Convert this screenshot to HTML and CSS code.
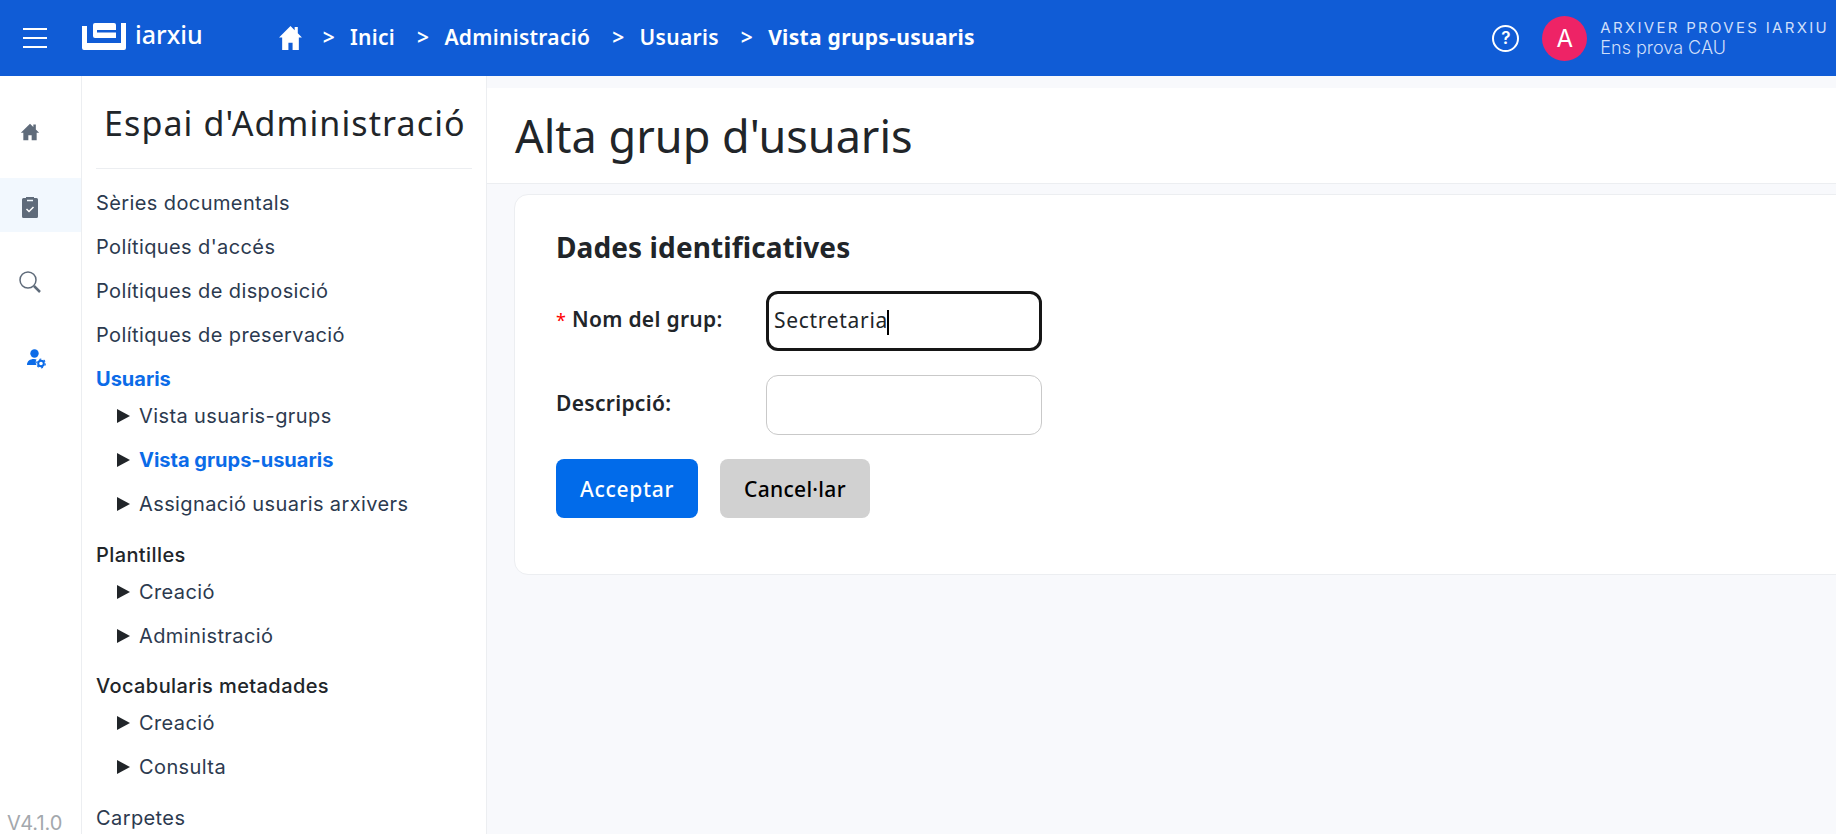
FILE: index.html
```html
<!DOCTYPE html>
<html>
<head>
    <title>Alta grup d'usuaris</title>
    <link rel="stylesheet" href="styles.css">
</head>
<body>
    <header class="topbar">
        <div class="menu-btn"><span></span><span></span><span></span></div>
        <div class="logo">
            <svg width="45" height="27" viewBox="0 0 45 27">
                <path d="M0 3h5v17h34V0h5v25a2 2 0 0 1-2 2H2a2 2 0 0 1-2-2z" fill="#fff"/>
                <path d="M13 0h19a2 2 0 0 1 2 2v13H13a2 2 0 0 1-2-2V2a2 2 0 0 1 2-2z" fill="#fff"/>
                <rect x="15" y="7" width="19" height="2.500" fill="#105cd6"/>
            </svg>
            <span class="logo-text">iarxiu</span>
        </div>
        <nav class="crumbs">
            <svg class="crumb-home" width="25" height="25" viewBox="0 0 24 24">
                <path d="M12 1 1 12h3v12h6v-7h4v7h6V12h3l-4-4V2h-3v3z" fill="#fff"/>
            </svg>
            <span class="crumb"><b>&gt;</b>Inici</span>
            <span class="crumb"><b>&gt;</b>Administració</span>
            <span class="crumb"><b>&gt;</b>Usuaris</span>
            <span class="crumb crumb-last"><b>&gt;</b>Vista grups-usuaris</span>
        </nav>
        <div class="user">
            <div class="help">?</div>
            <div class="avatar">A</div>
            <div class="user-text">
                <div class="user-archive">ARXIVER PROVES IARXIU</div>
                <div class="user-name">Ens prova CAU</div>
            </div>
        </div>
    </header>

    <div class="layout">
        <aside class="rail">
            <div class="rail-item rail-home">
                <svg width="20" height="20" viewBox="0 0 24 24"><path d="M12 2 1 13h3v9h6v-6h4v6h6v-9h3l-4-4V3h-3v3z" fill="#5f6b7a"/></svg>
            </div>
            <div class="rail-item rail-low rail-active">
                <svg width="20" height="24" viewBox="0 0 20 24">
                    <path d="M6 2h8v1h2.500A1.500 1.500 0 0 1 18 4.500v17a1.500 1.500 0 0 1-1.500 1.500h-13A1.500 1.500 0 0 1 2 21.500v-17A1.500 1.500 0 0 1 3.500 3H6z" fill="#5f6b7a"/>
                    <path d="M7 5.500h6" stroke="#f2f8fe" stroke-width="1.500"/>
                    <path d="m6.500 14 2.500 2.500 4.500-4.500" stroke="#fff" stroke-width="1.500" fill="none"/>
                </svg>
            </div>
            <div class="rail-item">
                <svg width="24" height="24" viewBox="0 0 24 24">
                    <circle cx="10" cy="10" r="8" stroke="#5f6b7a" stroke-width="1.500" fill="none"/>
                    <path d="m16 16 6 6" stroke="#5f6b7a" stroke-width="2.500"/>
                </svg>
            </div>
            <div class="rail-item rail-user">
                <svg width="20" height="20" viewBox="0 0 20 20">
                    <circle cx="8.500" cy="4.500" r="4.200" fill="#0b6be8"/>
                    <path d="M1 16c0-4 3-6 7-6 1 0 2 .2 2.500.5-1 1.500-1 4 0 5.500z" fill="#0b6be8"/>
                    <circle cx="15" cy="14.500" r="2.800" stroke="#0b6be8" stroke-width="2" fill="none"/>
                    <circle cx="15" cy="14.500" r="4.300" stroke="#0b6be8" stroke-width="1.200" stroke-dasharray="2 2.500" fill="none"/>
                </svg>
            </div>
            <div class="version">V4.1.0</div>
        </aside>

        <aside class="sidebar">
            <h2 class="sidebar-title">Espai d'Administració</h2>
            <ul class="side-list">
                <li class="side-item">Sèries documentals</li>
                <li class="side-item">Polítiques d'accés</li>
                <li class="side-item">Polítiques de disposició</li>
                <li class="side-item">Polítiques de preservació</li>
                <li class="side-head side-current">Usuaris</li>
                <li class="side-sub">Vista usuaris-grups</li>
                <li class="side-sub side-current">Vista grups-usuaris</li>
                <li class="side-sub">Assignació usuaris arxivers</li>
                <li class="side-head side-group">Plantilles</li>
                <li class="side-sub">Creació</li>
                <li class="side-sub">Administració</li>
                <li class="side-head side-group">Vocabularis metadades</li>
                <li class="side-sub">Creació</li>
                <li class="side-sub">Consulta</li>
                <li class="side-item side-group">Carpetes</li>
            </ul>
        </aside>

        <main class="content">
            <div class="page-head"><h1>Alta grup d'usuaris</h1></div>
            <section class="card">
                <h3>Dades identificatives</h3>
                <div class="form-row">
                    <label for="nom"><span class="req">*</span> Nom del grup:</label>
                    <div class="field field-focus" id="nom">Sectretaria<i class="caret"></i></div>
                </div>
                <div class="form-row">
                    <label for="desc">Descripció:</label>
                    <div class="field" id="desc"></div>
                </div>
                <div class="actions">
                    <button class="btn btn-ok">Acceptar</button>
                    <button class="btn btn-cancel">Cancel·lar</button>
                </div>
            </section>
        </main>
    </div>
</body>
</html>
```

FILE: styles.css
```css
* {
    box-sizing: border-box;
}
html, body {
    height: 100%;
}
body {
    margin: 0;
    overflow: hidden;
    font-family: Inter, "Noto Sans", sans-serif;
    color: #212529;
    background-color: #f8f9fc;
}
.topbar {
    display: flex;
    align-items: center;
    height: 76px;
    background-color: #105cd6;
    color: #fff;
}
.menu-btn {
    display: flex;
    flex-direction: column;
    gap: 7px;
    width: 24px;
    margin-left: 23px;
}
.menu-btn span {
    height: 2px;
    background-color: #fff;
}
.logo {
    display: flex;
    align-items: flex-start;
    align-self: flex-start;
    gap: 8px;
    margin-top: 23px;
    margin-left: 35px;
}
.logo-text {
    margin-top: -3px;
    font-family: "Noto Sans", sans-serif;
    font-size: 25px;
    line-height: 28px;
    font-weight: 500;
}
.crumbs {
    display: flex;
    align-items: center;
    margin-top: -2px;
    margin-left: 75px;
    font-family: "Noto Sans", sans-serif;
    font-size: 21px;
    font-weight: 600;
    letter-spacing: 0.3px;
}
.crumb {
    margin-left: 20px;
    margin-right: 2px;
}
.crumb b {
    margin-right: 15px;
    font-weight: 600;
}
.crumb-last {
    font-weight: 700;
}
.user {
    display: flex;
    align-items: center;
    margin-left: auto;
    padding-right: 7px;
}
.help {
    width: 27px;
    height: 27px;
    border: 2px solid #fff;
    border-radius: 50%;
    font-size: 17px;
    font-weight: 600;
    line-height: 23px;
    text-align: center;
}
.avatar {
    width: 45px;
    height: 45px;
    margin-left: 23px;
    border-radius: 50%;
    background-color: #ee2366;
    font-size: 24px;
    line-height: 45px;
    text-align: center;
}
.user-text {
    margin-left: 13px;
    color: #cfdffa;
}
.user-archive {
    font-size: 15px;
    line-height: 20px;
    letter-spacing: 2.3px;
}
.user-name {
    font-size: 18px;
    font-weight: 300;
    line-height: 20px;
}
.layout {
    display: flex;
    height: 758px;
}
.rail {
    position: relative;
    width: 82px;
    flex: none;
    padding-top: 25px;
    background-color: #fff;
    border-right: 1px solid #eceef1;
}
.rail-item {
    display: flex;
    align-items: center;
    justify-content: center;
    width: 81px;
    height: 54px;
    margin-bottom: 23px;
    padding-right: 22px;
}
.rail-home {
    padding-top: 8px;
}
.rail-low {
    padding-top: 4px;
}
.rail-user {
    padding-right: 9px;
}
.rail-active {
    background-color: #f2f8fe;
}
.version {
    position: absolute;
    left: 7px;
    bottom: -1px;
    font-size: 20px;
    color: #a3a8ad;
}
.sidebar {
    width: 405px;
    flex: none;
    overflow: hidden;
    padding: 0 14px;
    background-color: #fff;
    border-right: 1px solid #eceef1;
}
.sidebar-title {
    height: 93px;
    margin: 0;
    padding: 25px 0 0 8px;
    font-family: "Noto Sans", sans-serif;
    font-size: 34px;
    font-weight: 400;
    line-height: 44px;
    letter-spacing: 1.1px;
    white-space: nowrap;
    border-bottom: 1px solid #eceef1;
}
.side-list {
    list-style: none;
    margin: 0;
    padding: 12px 0 0;
    font-size: 20px;
    letter-spacing: 0.4px;
    color: #2c3a4f;
}
.side-item, .side-head, .side-sub {
    height: 44px;
    line-height: 44px;
    white-space: nowrap;
}
.side-head {
    color: #212529;
    font-weight: 500;
}
.side-current {
    color: #0b6be8;
    font-weight: 700;
    letter-spacing: 0;
}
.side-sub {
    position: relative;
    padding-left: 43px;
}
.side-sub::before {
    content: "";
    position: absolute;
    left: 21px;
    top: 15px;
    border-left: 13px solid #212529;
    border-top: 7px solid transparent;
    border-bottom: 7px solid transparent;
}
.side-head.side-current {
    height: 37px;
}
.side-group {
    height: 37px;
    margin-top: 6.500px;
}
.content {
    flex: 1;
    min-width: 0;
    overflow: hidden;
    padding-top: 12px;
}
.page-head {
    height: 96px;
    padding-left: 28px;
    background-color: #fff;
    border-bottom: 1px solid #eceef1;
}
.page-head h1 {
    margin: 0;
    font-family: "Noto Sans", sans-serif;
    font-size: 45px;
    font-weight: 400;
    line-height: 96px;
}
.card {
    height: 381px;
    margin: 10px -20px 0 27px;
    padding: 34px 41px;
    background-color: #fff;
    border: 1px solid #eceef1;
    border-radius: 14px;
}
.card h3 {
    margin: 0 0 26px;
    font-family: "Noto Sans", sans-serif;
    font-size: 28px;
    font-weight: 700;
    line-height: 36px;
    letter-spacing: 0.1px;
}
.form-row {
    display: flex;
    align-items: center;
    margin-bottom: 24px;
}
.form-row label {
    width: 210px;
    padding-bottom: 4px;
    font-family: "Noto Sans", sans-serif;
    font-size: 21px;
    font-weight: 600;
    letter-spacing: 0.3px;
}
.req {
    color: #f00;
    font-size: 18px;
    font-weight: 400;
}
.field {
    width: 276px;
    height: 60px;
    padding-left: 7px;
    border: 1px solid #c9c9c9;
    border-radius: 12px;
    font-family: "Noto Sans", sans-serif;
    font-size: 21px;
    line-height: 58px;
    letter-spacing: 0.7px;
}
.field-focus {
    padding-left: 5px;
    border: 3px solid #161616;
    line-height: 52px;
}
.caret {
    display: inline-block;
    width: 2px;
    height: 25px;
    margin-left: -1px;
    vertical-align: middle;
    background-color: #000;
}
.actions {
    display: flex;
    gap: 22px;
}
.btn {
    height: 59px;
    padding: 0 24px;
    border: none;
    border-radius: 8px;
    font-family: "Noto Sans", sans-serif;
    font-size: 21px;
    font-weight: 500;
}
.btn-ok {
    background-color: #016bea;
    color: #fff;
    letter-spacing: 0.7px;
}
.btn-cancel {
    background-color: #d1d1d1;
    color: #000;
    letter-spacing: 0.3px;
}
```
